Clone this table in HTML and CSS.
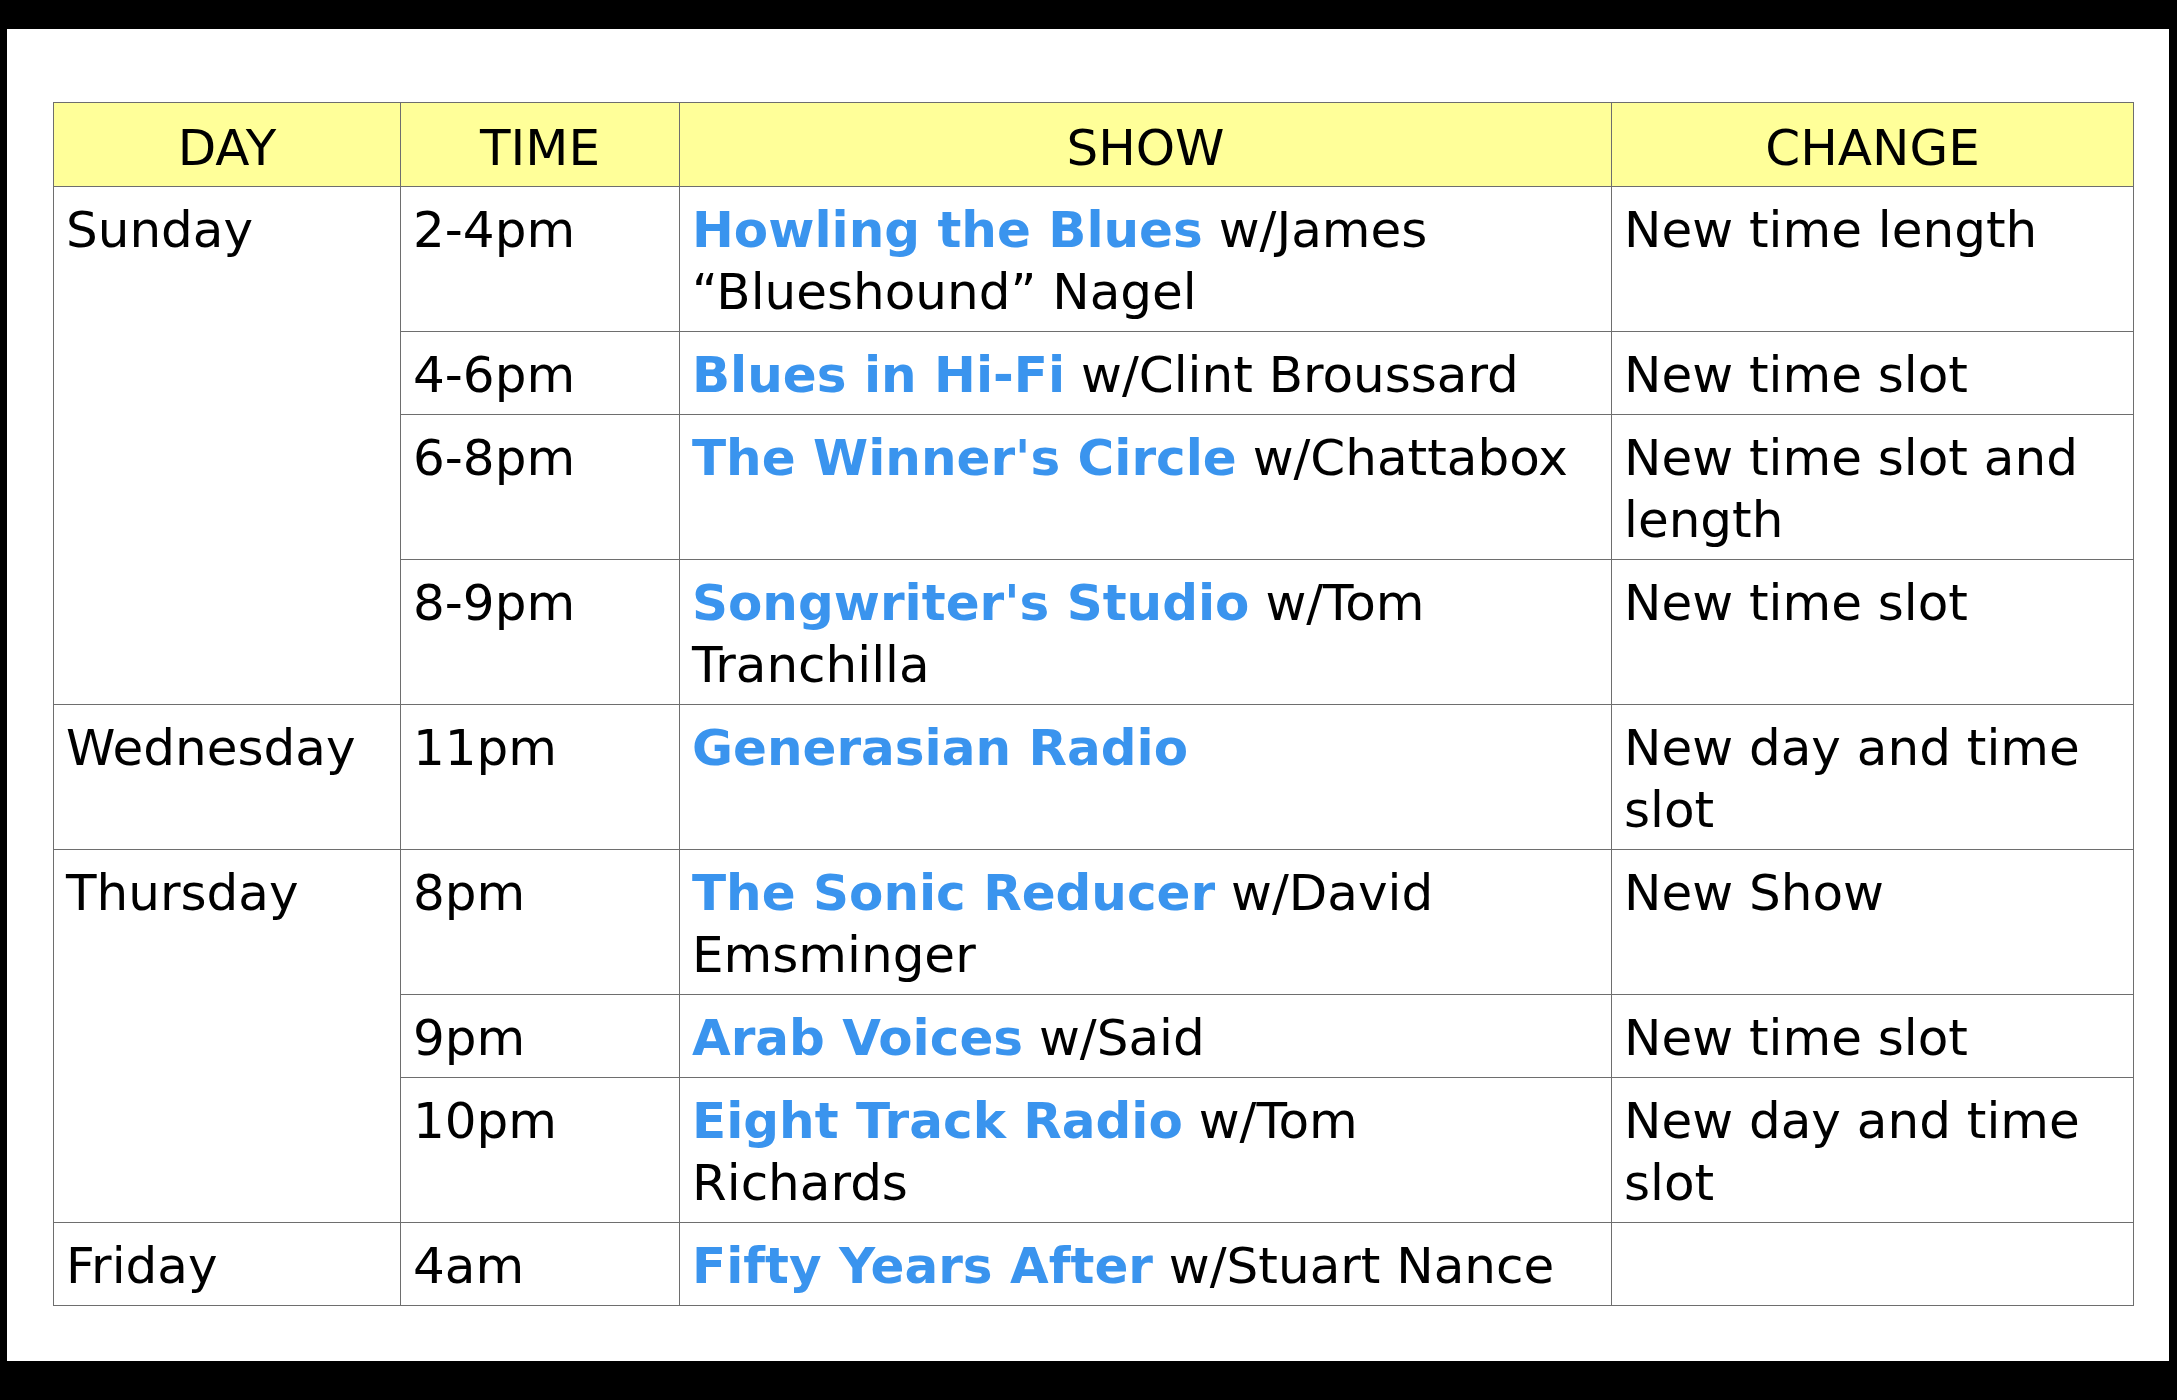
FILE: index.html
```html
<!DOCTYPE html>
<html lang="en">
<head>
<meta charset="utf-8">
<title>Schedule Changes</title>
<link rel="stylesheet" href="styles.css">
</head>
<body>
<div class="panel">
  <table class="schedule">
    <colgroup>
      <col class="c-day">
      <col class="c-time">
      <col class="c-show">
      <col class="c-change">
    </colgroup>
    <thead>
      <tr><th>DAY</th><th>TIME</th><th>SHOW</th><th>CHANGE</th></tr>
    </thead>
    <tbody>
      <tr>
        <td rowspan="4">Sunday</td>
        <td>2-4pm</td>
        <td><span class="show">Howling the Blues</span> w/James “Blueshound” Nagel</td>
        <td>New time length</td>
      </tr>
      <tr>
        <td>4-6pm</td>
        <td><span class="show">Blues in Hi-Fi</span> w/Clint Broussard</td>
        <td>New time slot</td>
      </tr>
      <tr>
        <td>6-8pm</td>
        <td><span class="show">The Winner's Circle</span> w/Chattabox</td>
        <td>New time slot and length</td>
      </tr>
      <tr>
        <td>8-9pm</td>
        <td><span class="show">Songwriter's Studio</span> w/Tom Tranchilla</td>
        <td>New time slot</td>
      </tr>
      <tr>
        <td>Wednesday</td>
        <td>11pm</td>
        <td><span class="show">Generasian Radio</span></td>
        <td>New day and time slot</td>
      </tr>
      <tr>
        <td rowspan="3">Thursday</td>
        <td>8pm</td>
        <td><span class="show">The Sonic Reducer</span> w/David Emsminger</td>
        <td>New Show</td>
      </tr>
      <tr>
        <td>9pm</td>
        <td><span class="show">Arab Voices</span> w/Said</td>
        <td>New time slot</td>
      </tr>
      <tr>
        <td>10pm</td>
        <td><span class="show">Eight Track Radio</span> w/Tom Richards</td>
        <td>New day and time slot</td>
      </tr>
      <tr>
        <td>Friday</td>
        <td>4am</td>
        <td><span class="show">Fifty Years After</span> w/Stuart Nance</td>
        <td></td>
      </tr>
    </tbody>
  </table>
</div>
</body>
</html>
```

FILE: styles.css
```css
html, body {
  margin: 0;
  padding: 0;
  background: #000;
}

body {
  width: 2177px;
  height: 1400px;
  overflow: hidden;
}

.panel {
  box-sizing: border-box;
  margin: 29px 0 0 7px;
  width: 2162px;
  height: 1332px;
  padding: 73px 0 0 46px;
  background: #fff;
}

.schedule {
  border-collapse: collapse;
  table-layout: fixed;
  width: 2080px;
  font-family: "DejaVu Sans", Verdana, sans-serif;
  font-size: 50px;
  line-height: 62px;
  color: #000;
}

.c-day { width: 347px; }
.c-time { width: 279px; }
.c-show { width: 932px; }
.c-change { width: 522px; }

.schedule th,
.schedule td {
  border: 1px solid #6e6e6e;
  vertical-align: top;
  text-align: left;
}

.schedule th {
  background: #ffff99;
  font-weight: normal;
  text-align: center;
  padding: 14px 10px 7px 10px;
}

.schedule td {
  padding: 12px 28px 8px 12px;
}

.show {
  color: #3a94ee;
  font-weight: bold;
}
```
